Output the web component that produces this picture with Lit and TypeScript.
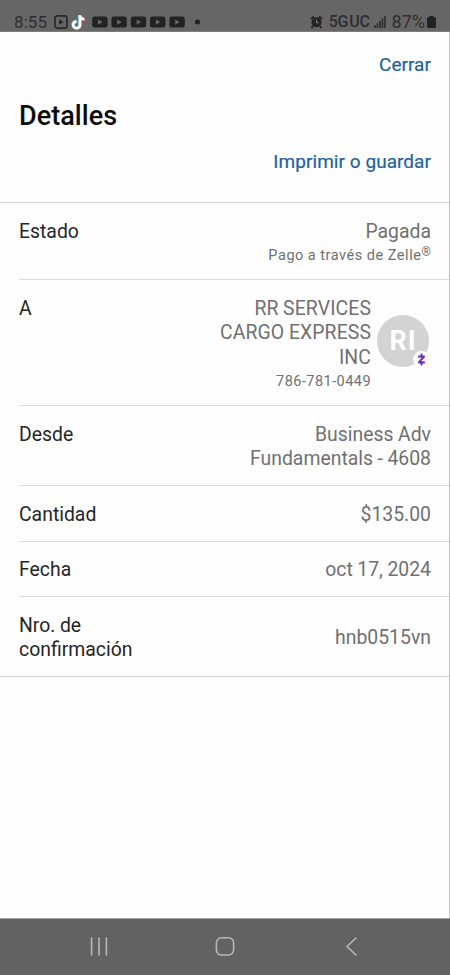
import { css, html, LitElement, svg } from 'lit';
import { customElement, property } from 'lit/decorators.js';

/**
 * The dimmed Android status bar.
 */
@customElement('status-bar')
export class StatusBar extends LitElement {
  static override styles = css`
    :host {
      display: flex;
      box-sizing: border-box;
      height: 32px;
      padding: 12px 14px 0 14px;
      justify-content: space-between;
      background: #666;
      border-bottom: 1px solid #7d7d7d;
      color: #2e2e2e;
      font: 400 17px/20px Roboto, sans-serif;
    }

    .side {
      display: flex;
      align-items: center;
      height: 20px;
    }

    .time {
      width: 40px;
      letter-spacing: 0.1px;
    }

    .network {
      margin: 0 4px 0 6px;
      font-size: 16px;
      font-weight: 500;
      letter-spacing: -0.3px;
      word-spacing: -2.5px;
    }

    .percent {
      margin: 0 2px 0 6px;
      font-size: 18px;
      letter-spacing: 0;
    }

    svg {
      display: block;
      flex: none;
    }
  `;

  override render() {
    return html`
      <div class="side">
        <span class="time">8:55</span>
        <svg width="148" height="18" viewBox="0 0 148 18">
          <rect x="1" y="2.8" width="12" height="12.4" rx="2.5" fill="none" stroke="#2a2a2a" stroke-width="1.7" />
          <path d="M5 6.2v5.6L9.8 9z" fill="#2a2a2a" />
          <g fill="none" stroke-width="2.6">
            <path d="M25.2 2v9.5a3.4 3.4 0 1 1-3.4-3.4M25.2 2.4c.3 2 1.7 3.5 4.3 3.7" stroke="#5cc4c8" />
            <path d="M26.8 2.8v9.5a3.4 3.4 0 1 1-3.4-3.4M26.8 3.2c.3 2 1.7 3.5 4.3 3.7" stroke="#c6627a" />
            <path d="M26 2.2v9.7a3.4 3.4 0 1 1-3.4-3.4M26 2.6c.3 2 1.7 3.5 4.3 3.7" stroke="#fff" />
          </g>
          ${[38.2, 57.4, 76.8, 96, 115.4].map(
            (x) => svg`
              <rect x=${x} y="3.6" width="15.4" height="11" rx="2.4" fill="#222" />
              <path d="M0 0v5.2L4.6 2.6z" transform="translate(${x + 5.8} 6.5)" fill="#666" />
            `
          )}
          <circle cx="143.5" cy="9" r="2.5" fill="#222" />
        </svg>
      </div>
      <div class="side">
        <svg width="13" height="14" viewBox="0 0 13 14">
          <circle cx="6.5" cy="7.3" r="5" fill="#222" />
          <path d="M1 4.2 3.8 1.5M12 4.2 9.2 1.5M3 11 1.5 13M10 11l1.5 2" stroke="#222" stroke-width="1.8" />
          <path d="M6.5 4.6v3h2.2" fill="none" stroke="#777" stroke-width="1.1" />
        </svg>
        <span class="network">5G UC</span>
        <svg width="12" height="12" viewBox="0 0 12 12" fill="#333">
          <path d="M0 9.2h1.8V12H0zM2.5 7.2h1.8V12H2.5zM5 4.9h1.8V12H5zM7.5 2.5h1.8V12H7.5zM10 0h1.8v12H10z" />
        </svg>
        <span class="percent">87%</span>
        <svg width="9" height="12" viewBox="0 0 9 12">
          <path d="M2.5 0h4v1.3h1A1.4 1.4 0 0 1 9 2.7v7.8A1.5 1.5 0 0 1 7.5 12h-6A1.5 1.5 0 0 1 0 10.5V2.7A1.4 1.4 0 0 1 1.5 1.3h1z" fill="#222" />
        </svg>
      </div>
    `;
  }
}

/**
 * A label and value pair.
 *
 * @slot - The value
 */
@customElement('detail-row')
export class DetailRow extends LitElement {
  @property()
  label = '';

  static override styles = css`
    :host {
      display: flex;
      box-sizing: border-box;
      justify-content: space-between;
      margin-left: 19px;
      padding: 16.8px 18px 0 0;
      border-bottom: 1px solid #dcdcdc;
      font: 400 19.4px/24.4px Roboto, sans-serif;
      letter-spacing: 0;
      word-spacing: -0.3px;
    }

    .label {
      width: 130px;
      color: #262626;
    }

    .value {
      color: #707070;
      text-align: right;
    }
  `;

  override render() {
    return html`
      <div class="label">${this.label}</div>
      <div class="value"><slot></slot></div>
    `;
  }
}

@customElement('nav-bar')
export class NavBar extends LitElement {
  static override styles = css`
    :host {
      display: flex;
      box-sizing: border-box;
      height: 57px;
      padding: 0 36px;
      align-items: center;
      background: #626262;
      border-top: 1px solid #a0a0a0;
    }

    svg {
      flex: 1;
      height: 20px;
      fill: none;
      stroke: #b8b8b8;
      stroke-width: 1.6;
      stroke-linecap: round;
      stroke-linejoin: round;
    }
  `;

  override render() {
    return html`
      <svg viewBox="0 0 20 20"><path d="M2.6 1v17M10 1v17M17.4 1v17" /></svg>
      <svg viewBox="0 0 20 20"><rect x="1.4" y=".8" width="17.2" height="17.2" rx="5" /></svg>
      <svg viewBox="0 0 20 20"><path d="M15 1 6 9.5l9 8.5" /></svg>
    `;
  }
}

@customElement('app-root')
export class AppRoot extends LitElement {
  static override styles = css`
    :host {
      display: flex;
      flex-direction: column;
      height: 975px;
      background: #fefefe;
      font-family: Roboto, sans-serif;
    }

    .page {
      flex: 1;
      border-right: 1px solid #c4c4c4;
    }

    .header {
      box-sizing: border-box;
      height: 171px;
      padding: 21px 18px 0 19px;
      border-bottom: 1px solid #d4d4d4;
    }

    .link {
      color: #1f639c;
      font-size: 19px;
      line-height: 24px;
      letter-spacing: 0.05px;
      text-align: right;
      -webkit-text-stroke: 0.2px #1f639c;
    }

    h1 {
      margin: 24px 0 18px;
      color: #0c0c0c;
      font-size: 27px;
      font-weight: 500;
      line-height: 31px;
      letter-spacing: 0.05px;
    }

    .status {
      height: 77px;
    }

    .recipient {
      height: 126px;
    }

    .double {
      height: 80px;
    }

    .single {
      height: 55.5px;
    }

    .last {
      margin-left: 0;
      padding-left: 19px;
      border-color: #d4d4d4;
    }

    .small {
      font-size: 14.5px;
      line-height: 24px;
      letter-spacing: 0.58px;
    }

    .phone {
      letter-spacing: 0.45px;
    }

    .small sup {
      font-size: 12px;
      line-height: 0;
      letter-spacing: 0;
      vertical-align: 4px;
    }

    .payee {
      display: flex;
      gap: 6px;
    }

    .name {
      letter-spacing: 0.1px;
    }

    .avatar {
      position: relative;
      width: 52px;
      height: 52px;
      margin: 18.2px 2px 0 0;
      border-radius: 50%;
      background: #d3d3d3;
      color: #fff;
      font-size: 27px;
      font-weight: 700;
      line-height: 52px;
      letter-spacing: 0.8px;
      text-align: center;
    }

    .badge {
      position: absolute;
      right: -1px;
      bottom: -1px;
    }

    .code {
      display: block;
      padding-top: 12px;
    }
  `;

  override render() {
    return html`
      <status-bar></status-bar>
      <div class="page">
        <div class="header">
          <div class="link">Cerrar</div>
          <h1>Detalles</h1>
          <div class="link">Imprimir o guardar</div>
        </div>
        <detail-row class="status" label="Estado">
          Pagada
          <div class="small">Pago a través de Zelle<sup>®</sup></div>
        </detail-row>
        <detail-row class="recipient" label="A">
          <div class="payee">
            <div class="name">
              RR SERVICES<br />CARGO EXPRESS<br />INC
              <div class="small phone">786-781-0449</div>
            </div>
            <div class="avatar">
              RI
              <svg class="badge" width="17" height="17" viewBox="0 0 17 17">
                <circle cx="8.5" cy="8.5" r="8.5" fill="#fefefe" />
                <path d="M5.2 4.6h6.6v1.9L8.2 10.300h3.6v2.1H5.200v-1.900L8.800 6.700H5.200zM7.600 2.600h1.900v2.200H7.600zM7.600 12.200h1.900v2.200H7.600z" fill="#6b2fb0" />
              </svg>
            </div>
          </div>
        </detail-row>
        <detail-row class="double" label="Desde">Business Adv<br />Fundamentals - 4608</detail-row>
        <detail-row class="single" label="Cantidad">$135.00</detail-row>
        <detail-row class="single" label="Fecha">oct 17, 2024</detail-row>
        <detail-row class="double last" label="Nro. de confirmación">
          <span class="code">hnb0515vn</span>
        </detail-row>
      </div>
      <nav-bar></nav-bar>
    `;
  }
}
